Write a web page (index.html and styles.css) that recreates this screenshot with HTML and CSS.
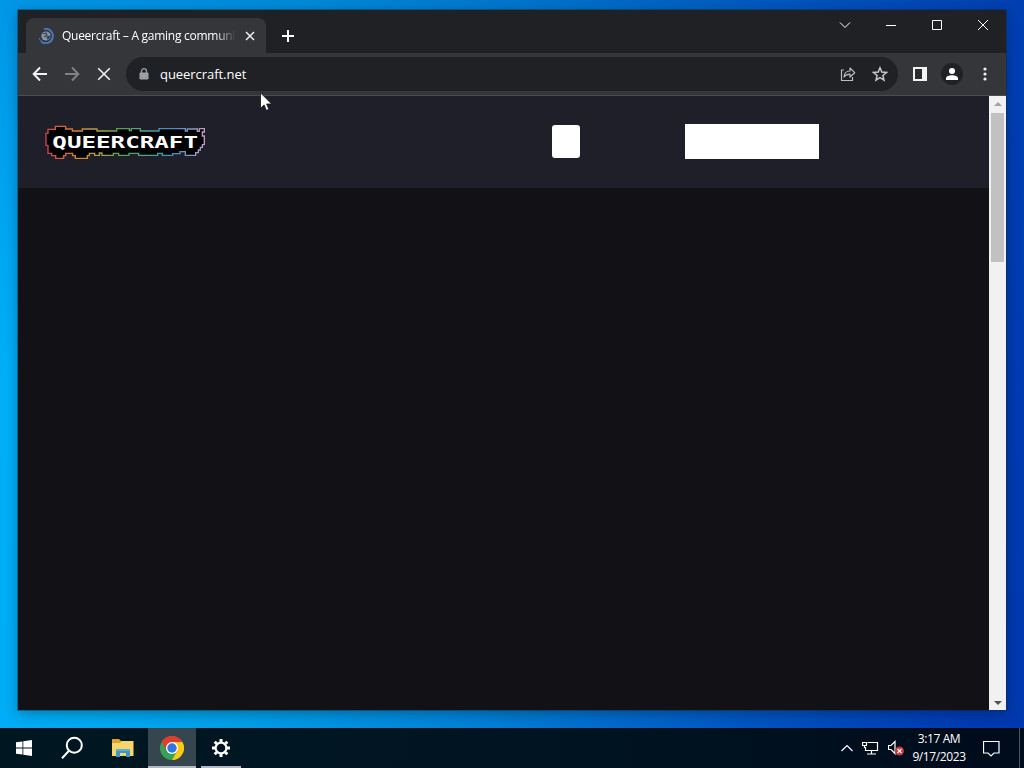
FILE: index.html
```html
<!DOCTYPE html>
<html lang="en">
<head>
  <meta charset="UTF-8" />
  <meta name="viewport" content="width=device-width, initial-scale=1.0"/>
  <title>Queercraft – A gaming community</title>
  <link rel="stylesheet" href="styles.css">
</head>
<body>
  <div class="window">
    <div class="titlebar">
      <div class="tab">
        <svg class="favicon" width="16" height="16" viewBox="0 0 16 16" fill="none">
          <path d="M6 1A7.2 7.2 0 1 1 3 13.5" stroke="#4577b8" stroke-width="2"/>
          <circle cx="8" cy="8" r="4.6" fill="#8799ae"/>
          <path d="M5 6l3-1 1 2-3 2M9 9l3-1-2 3z" stroke="#34404f" stroke-width="1.2"/>
          <path d="M1 10q1 3 4 4" stroke="#4577b8"/>
        </svg>
        <span class="tab-title">Queercraft – A gaming communi</span>
        <svg class="tab-close" width="10" height="10" viewBox="0 0 10 10" stroke="#f1f1f1" stroke-width="1.5"><path d="M1 1l8 8M9 1l-8 8"/></svg>
      </div>
      <svg class="new-tab" width="12" height="12" viewBox="0 0 12 12" stroke="#fff" stroke-width="2"><path d="M6 0v12M0 6h12"/></svg>
      <div class="controls">
        <svg width="46" height="30" viewBox="0 0 46 30"><path d="M18 12.5l5 5 5-5"/></svg>
        <svg width="46" height="30" viewBox="0 0 46 30"><path d="M18 15.5h10"/></svg>
        <svg width="46" height="30" viewBox="0 0 46 30"><path d="M18.5 10.5h9v9h-9z"/></svg>
        <svg width="46" height="30" viewBox="0 0 46 30"><path d="M18 10l10 10M28 10l-10 10"/></svg>
      </div>
    </div>

    <div class="toolbar">
      <svg class="nav" width="16" height="16" viewBox="0 0 16 16"><path d="M15 8H2M8 1.5L1.7 8 8 14.5"/></svg>
      <svg class="nav disabled" width="16" height="16" viewBox="0 0 16 16"><path d="M1 8h13M8 1.5L14.3 8 8 14.5"/></svg>
      <svg class="nav stop" width="16" height="16" viewBox="0 0 16 16"><path d="M2.200 2.200l11.600 11.600M13.800 2.200L2.200 13.800"/></svg>
      <div class="omnibox">
        <svg width="10" height="13" viewBox="0 0 10 13"><path d="M1 5h8v6H1z" fill="#9aa0a6" stroke="#9aa0a6" stroke-linejoin="round"/><path d="M2.500 5V3.200a2.500 2.500 0 0 1 5 0V5" fill="none" stroke="#9aa0a6" stroke-width="1.300"/></svg>
        <span class="url">queercraft.net</span>
        <svg width="16" height="16" viewBox="0 0 16 16" fill="none" stroke="#b9bcc1" stroke-width="1.2"><path d="M4 4H1.500v10.500h11V11"/><path d="M4 11c.3-4 2.500-6 6-6V2l4.700 4.700L10 11V8.200c-2.800 0-4.500.8-6 2.800z" stroke-linejoin="round"/></svg>
        <svg class="star" width="16" height="16" viewBox="0 0 16 16" fill="none" stroke="#c4c7cc" stroke-width="1.5"><path d="M8 1.800l1.800 4.300 4.700.4-3.600 3 1.100 4.600L8 11.700l-4 2.400 1.100-4.600-3.600-3 4.700-.4z"/></svg>
      </div>
      <svg class="panel" width="14" height="14" viewBox="0 0 14 14"><path d="M0 0h14v14H0z" fill="#f4f4f4"/><path d="M2 2h7v10H2z" fill="#2b2c2f"/></svg>
      <div class="avatar">
        <svg width="12" height="12" viewBox="0 0 12 12" fill="#fff"><circle cx="6" cy="3" r="3"/><path d="M0 12v-1.500C0 8.500 3 7.300 6 7.300s6 1.200 6 3.200V12z"/></svg>
      </div>
      <svg class="menu" width="4" height="14" viewBox="0 0 4 14" fill="#f1f1f1"><circle cx="2" cy="2" r="1.600"/><circle cx="2" cy="7" r="1.600"/><circle cx="2" cy="12" r="1.600"/></svg>
    </div>

    <div class="viewport">
      <div class="page">
        <header class="site-header">
          <svg class="logo" width="162" height="36" viewBox="42 42 486 108">
            <defs>
              <linearGradient id="rainbow" gradientUnits="userSpaceOnUse" x1="47" y1="110" x2="523" y2="80">
                <stop offset="0" stop-color="#cf3f50"/>
                <stop offset=".18" stop-color="#d87a35"/>
                <stop offset=".32" stop-color="#b5a044"/>
                <stop offset=".48" stop-color="#53a04d"/>
                <stop offset=".62" stop-color="#55a58d"/>
                <stop offset=".8" stop-color="#3b8fc0"/>
                <stop offset="1" stop-color="#c39ac6"/>
              </linearGradient>
            </defs>
            <path d="M54 70V58H76V49H107V57H127V63H157V57H201V63H260V56H298V62H304V56H331V63H387V56H466V63H472V57H502V64H508V56H523V66H517V78H523V104H517V112H511V120H505V128H497V136H466V125H450V131H428V136H397V130H383V136H326V130H297V136H266V130H250V136H216V129H208V136H194V130H178V137H172V145H136V137H128V130H107V137H101V145H77V137H65V130H54V106H48V70Z" fill="#020204" stroke="url(#rainbow)" stroke-width="4"/>
            <text x="67" y="115" textLength="437" lengthAdjust="spacingAndGlyphs">QUEERCRAFT</text>
          </svg>
          <span class="box"></span>
          <span class="box wide"></span>
        </header>
      </div>
      <div class="scrollbar">
        <span class="arrow up"></span>
        <span class="thumb"></span>
        <span class="arrow down"></span>
      </div>
    </div>
  </div>

  <div class="taskbar">
    <div class="task">
      <svg width="16" height="16" viewBox="0 0 16 16" fill="#fff"><path d="M0 2.300l6.500-.9v6.200H0zM7.300 1.300L16 0v7.600H7.300zM0 8.400h6.500v6.200L0 13.700zM7.300 8.400H16V16l-8.700-1.200z"/></svg>
    </div>
    <div class="task search">
      <svg width="24" height="24" viewBox="0 0 24 24" fill="none" stroke="#fff" stroke-width="2"><circle cx="13.300" cy="9.200" r="7.500"/><path d="M8 14.700L1 22.200"/></svg>
    </div>
    <div class="task">
      <svg width="22" height="18" viewBox="0 0 22 18"><path d="M0 0h7l2 2h12v15H0z" fill="#dba528"/><path d="M0 4h8l2-2h11.500v15H0z" fill="#f7d568"/><path d="M4 10h14v8h-4v-4H8v4H4z" fill="#3f95c8"/><path d="M4 10h14v2H4z" fill="#5aaedb"/></svg>
    </div>
    <div class="task active">
      <svg width="24" height="24" viewBox="0 0 24 24">
        <circle cx="12" cy="12" r="12" fill="#34a353"/>
        <path d="M12 12L1.600 6A12 12 0 0 1 22.400 6z" fill="#e33b2e"/>
        <path d="M12 6h10.400A12 12 0 0 1 12 24l5.200-9z" fill="#fbc916"/>
        <path d="M1.600 6l5.200 9L12 6z" fill="#e33b2e"/>
        <circle cx="12" cy="12" r="6" fill="#fff"/>
        <circle cx="12" cy="12" r="4.700" fill="#2f76e0"/>
      </svg>
    </div>
    <div class="task open">
      <svg width="20" height="20" viewBox="-10 -10 20 20" fill="none" stroke="#fff"><circle r="5.400" stroke-width="2.200"/><path d="M0-9v3M0 9V6M-9 0h3M9 0H6M-6.300-6.300l2 2M6.300 6.300l-2-2M-6.300 6.300l2-2M6.300-6.300l-2 2" stroke-width="3"/></svg>
    </div>

    <div class="tray">
      <svg width="12" height="8" viewBox="0 0 12 8"><path d="M.5 7L6 1.500 11.500 7"/></svg>
      <svg width="17" height="15" viewBox="0 0 17 15"><path d="M5.500 1.500h10v8h-12V6M9.500 9.500v3M5 13h9M.5 1.500h4v3h-4zM2.500 4.500v2h1"/></svg>
      <svg width="17" height="16" viewBox="0 0 17 16"><path d="M.5 5.500H3l4-4v12l-4-4H.5z"/><circle cx="11.500" cy="11" r="4.500" fill="#cc343c" stroke="none"/><path d="M9.500 9l4 4M13.500 9l-4 4"/></svg>
    </div>
    <div class="clock">
      <span>3:17 AM</span>
      <span>9/17/2023</span>
    </div>
    <svg class="notify" width="17" height="17" viewBox="0 0 17 17"><path d="M.5 1.500h15.500v11.500h-5L8 16l-3-3H.5z"/></svg>
    <span class="peek"></span>
  </div>

  <svg class="cursor" width="13" height="20" viewBox="0 0 13 20"><path d="M.5.8v15.500l3.600-3.400 2.300 5.500 2.500-1.100-2.300-5.300h5z" fill="#fff" stroke="#111" stroke-width=".8"/></svg>
</body>
</html>
```
FILE: styles.css
```css
* {
  box-sizing: border-box;
}
body {
  margin: 0;
  width: 1024px;
  height: 768px;
  overflow: hidden;
  display: flex;
  flex-direction: column;
  justify-content: space-between;
  background:
    linear-gradient(180deg, rgba(0, 70, 170, 0.25), transparent 50%),
    linear-gradient(96deg, #00b2fb 0%, #009fe6 28%, #0080d4 50%, #0054c0 75%, #003db4 92%, #0038ae 100%);
  color: #fff;
  font-family: "Open Sans", "Noto Sans", sans-serif;
  font-size: 12px;
}
svg {
  display: block;
  flex-shrink: 0;
}

/* browser window */
.window {
  width: 988px;
  height: 700px;
  margin: 10px 0 0 18px;
  display: flex;
  flex-direction: column;
  background: #121115;
  box-shadow: 0 0 0 1px rgba(20, 40, 60, 0.4), 0 3px 12px rgba(0, 0, 0, 0.3);
}
.titlebar {
  height: 43px;
  display: flex;
  align-items: flex-start;
  background: #202124;
}
.tab {
  width: 240px;
  height: 35px;
  margin: 8px 0 0 8px;
  padding: 0 11px 0 12px;
  display: flex;
  align-items: center;
  background: #35363a;
  border-radius: 8px 8px 0 0;
}
.tab-title {
  width: 174px;
  margin: 0 9px 0 8px;
  white-space: nowrap;
  letter-spacing: -0.27px;
  -webkit-mask-image: linear-gradient(90deg, #000 88%, transparent);
  mask-image: linear-gradient(90deg, #000 88%, transparent);
}
.new-tab {
  margin: 20px 0 0 16px;
}
.controls {
  display: flex;
  margin-left: auto;
}
.controls svg {
  fill: none;
  stroke: #fff;
}
.toolbar {
  height: 43px;
  padding-left: 14px;
  display: flex;
  align-items: center;
  background: #35363a;
  border-bottom: 1px solid #4c4d51;
}
.nav {
  margin-right: 16px;
  fill: none;
  stroke: #f1f1f1;
  stroke-width: 2;
}
.nav.disabled {
  stroke: #808185;
}
.nav.stop {
  stroke-width: 1.6;
}
.omnibox {
  width: 772px;
  height: 34px;
  margin-left: -2px;
  padding: 0 10px 0 13px;
  display: flex;
  align-items: center;
  background: #202124;
  border-radius: 17px;
}
.url {
  margin: 0 auto 0 11px;
  font-size: 13px;
  letter-spacing: -0.05px;
}
.star {
  margin-left: 16px;
}
.panel {
  margin-left: 15px;
}
.avatar {
  width: 22px;
  height: 22px;
  margin: 0 20px 0 14px;
  display: flex;
  align-items: center;
  justify-content: center;
  background: #202124;
  border-radius: 50%;
}

/* page content */
.viewport {
  flex: 1;
  display: flex;
}
.page {
  flex: 1;
  background: #121115;
}
.site-header {
  height: 92px;
  padding: 0 170px 2px 26px;
  display: flex;
  align-items: center;
  background: #1f1f29;
}
.logo {
  margin-top: 2px;
}
.logo text {
  fill: #fff;
  font-family: "DejaVu Sans Mono", monospace;
  font-size: 47px;
  font-weight: bold;
}
.box {
  width: 28px;
  height: 33px;
  margin: 0 105px 0 auto;
  background: #fff;
  border-radius: 3px;
}
.box.wide {
  width: 134px;
  height: 35px;
  margin: 0;
  border-radius: 0;
}
.scrollbar {
  width: 17px;
  padding: 6px 0 5px;
  display: flex;
  flex-direction: column;
  align-items: center;
  background: #f1f1f1;
}
.arrow {
  border: 4px solid transparent;
}
.arrow.up {
  border-top: 0;
  border-bottom-color: #a3a3a3;
}
.arrow.down {
  margin-top: auto;
  border-bottom: 0;
  border-top-color: #505050;
}
.thumb {
  width: 13px;
  height: 149px;
  margin-top: 7px;
  background: #c1c1c1;
}

/* taskbar */
.taskbar {
  height: 40px;
  display: flex;
  align-items: center;
  background: linear-gradient(90deg, #001722, #001521 50%, #000b1c);
}
.task {
  width: 48px;
  height: 40px;
  margin-right: 1px;
  display: flex;
  align-items: center;
  justify-content: center;
}
.task.search {
  margin-right: 2px;
}
.task.active {
  padding-top: 2px;
  background: #36464f;
  border-bottom: 2px solid #b9b6c4;
}
.task.open {
  width: 40px;
  margin-left: 4px;
  padding-top: 2px;
  border-bottom: 2px solid #b9b6c4;
}
.tray {
  margin-left: auto;
  margin-right: -1px;
  display: flex;
  align-items: center;
  gap: 9px;
}
.tray svg,
.notify {
  fill: none;
  stroke: #fff;
  stroke-width: 1.2;
}
.clock {
  width: 70px;
  display: flex;
  flex-direction: column;
  align-items: center;
  line-height: 18px;
  letter-spacing: -0.4px;
}
.notify {
  margin-left: 9px;
}
.peek {
  width: 5px;
  height: 40px;
  margin-left: 19px;
  border-left: 1px solid #4a5363;
}

.cursor {
  position: absolute;
  left: 260px;
  top: 92px;
}
```
